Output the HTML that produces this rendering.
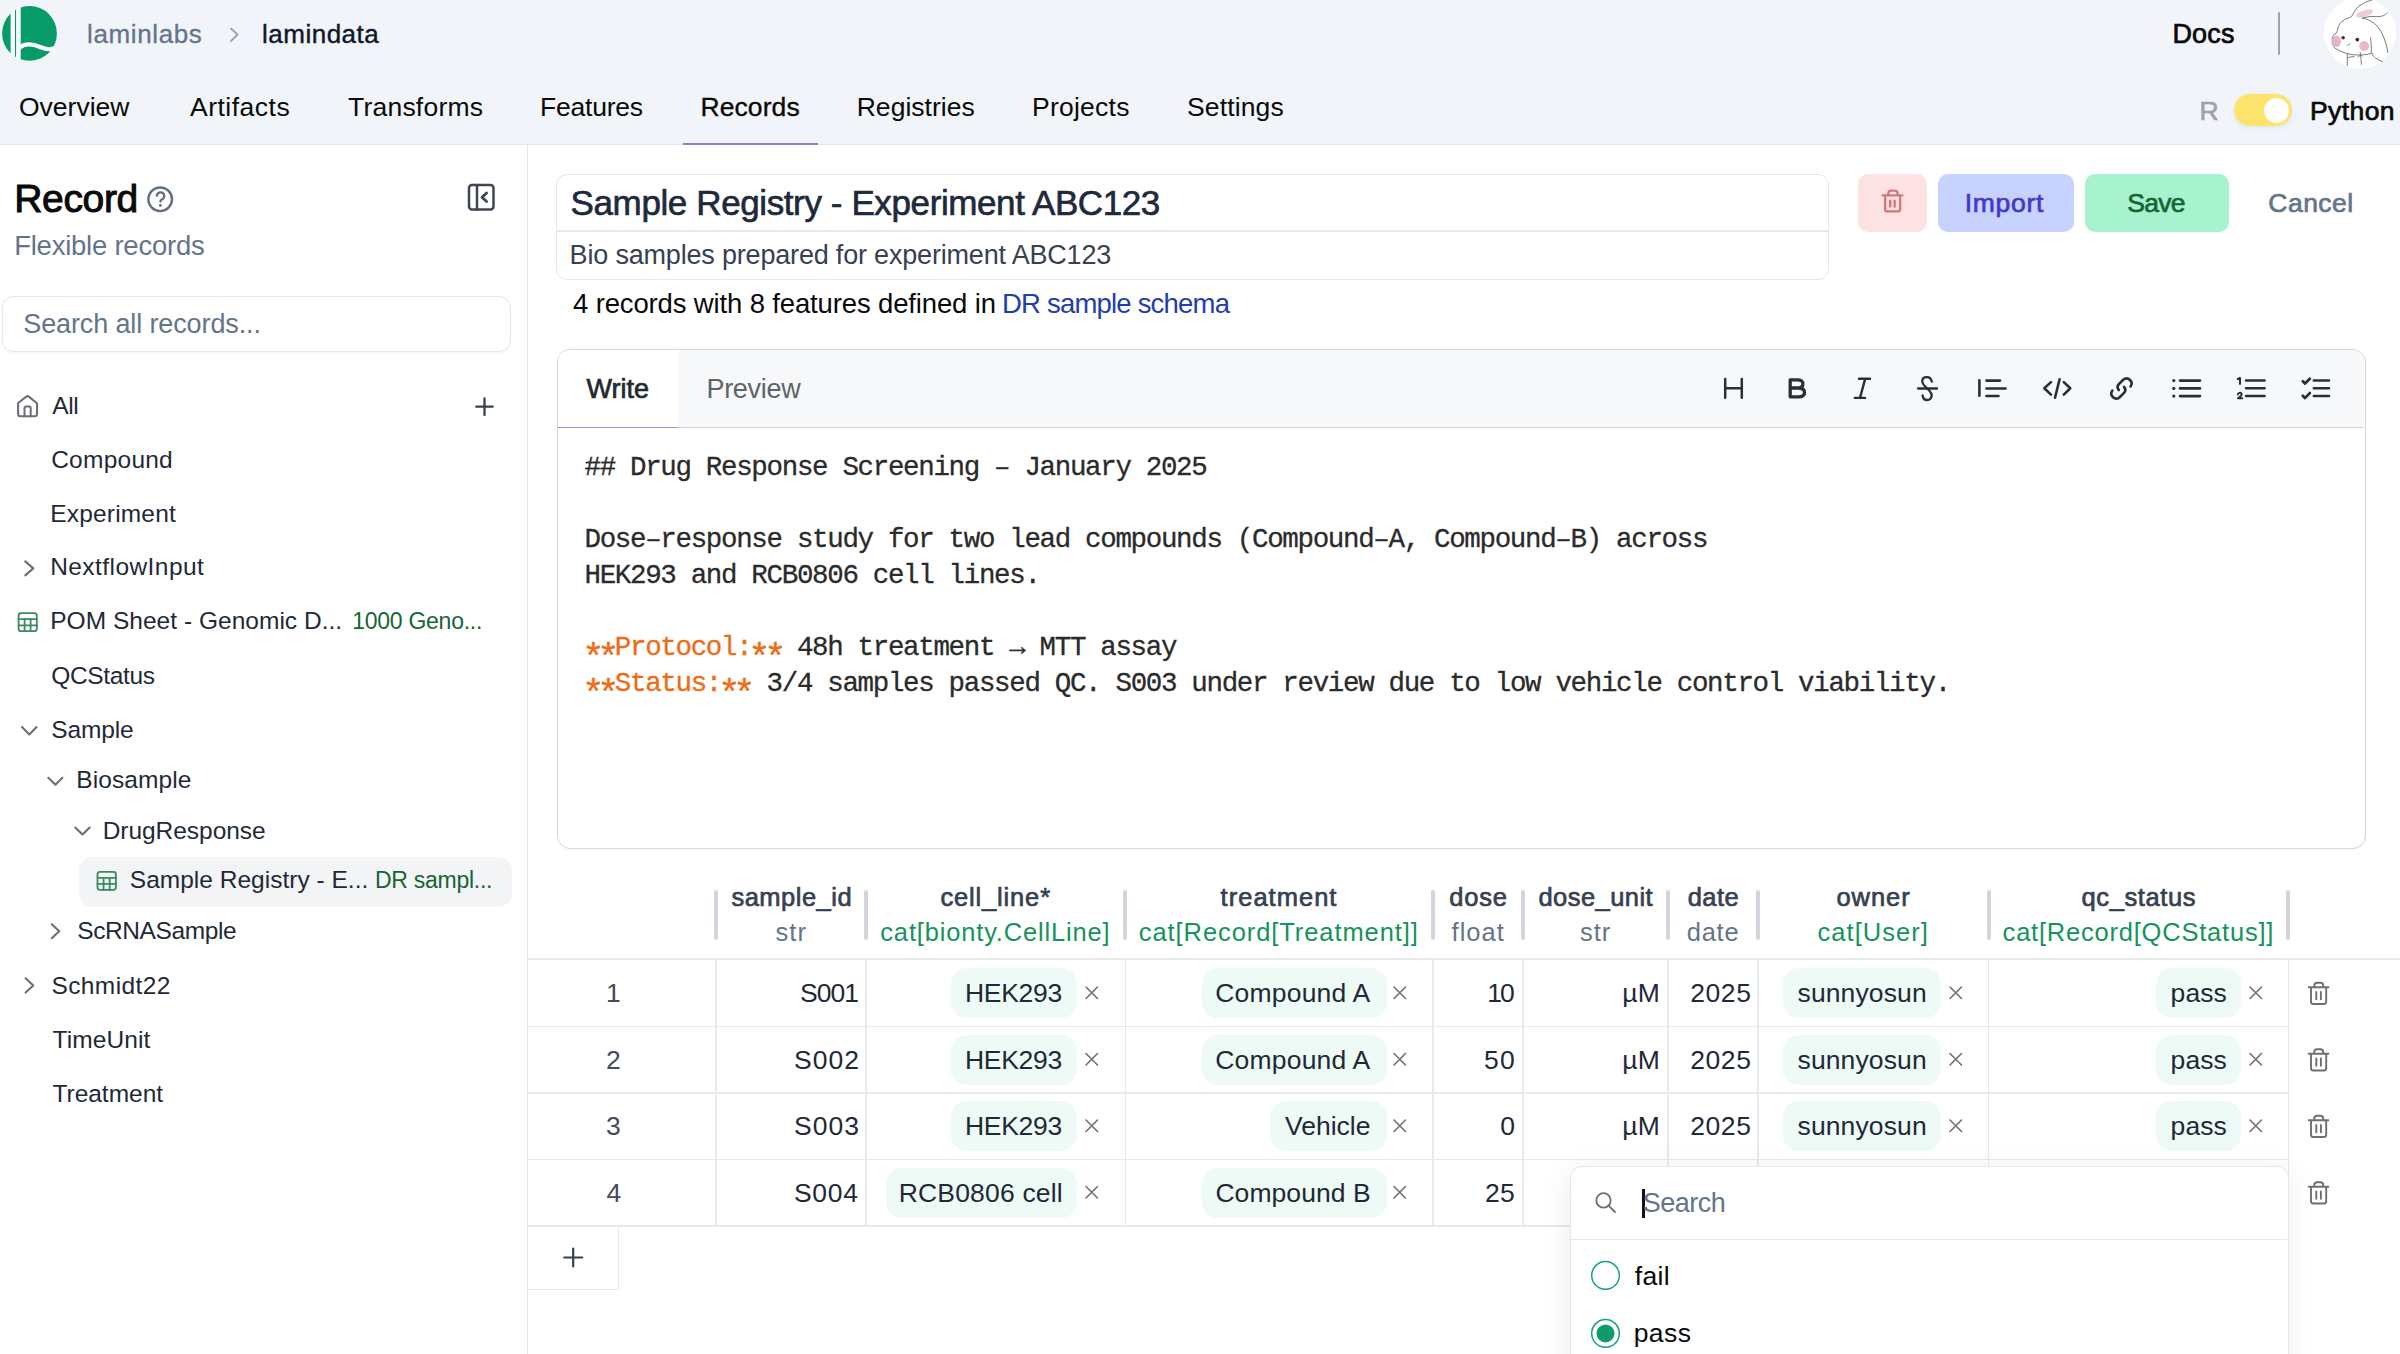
<!DOCTYPE html>
<html><head><meta charset="utf-8"><style>
html,body{margin:0;padding:0;width:2400px;height:1354px;overflow:hidden;background:#fff;font-family:'Liberation Sans',sans-serif}
.t{position:absolute;white-space:pre;line-height:1}
.b{position:absolute;box-sizing:border-box}
</style></head><body>
<!-- header -->
<div class=b style="left:0;top:0;width:2400px;height:145px;background:#f1f4f8;border-bottom:1px solid #e2e6ee"></div>
<div class=b style="left:683px;top:143px;width:135px;height:2px;background:#8a80d2"></div>
<div class=b style="left:2278px;top:12px;width:2px;height:43px;background:#9ca3af;border-radius:1px"></div>
<!-- toggle -->
<div class=b style="left:2234px;top:94px;width:58px;height:32px;border-radius:16px;background:#fde36c;box-shadow:0 2px 6px rgba(0,0,0,0.06)"></div>
<div class=b style="left:2263.5px;top:98px;width:25px;height:25px;border-radius:50%;background:#fff"></div>
<!-- sidebar -->
<div class=b style="left:526.5px;top:145px;width:1.5px;height:1209px;background:#e4e5ee"></div>
<div class=b style="left:2px;top:295.5px;width:509px;height:56px;border:1.5px solid #e5e7eb;border-radius:12px;box-shadow:0 1px 2px rgba(0,0,0,0.04)"></div>
<div class=b style="left:79px;top:856.5px;width:433px;height:50px;border-radius:14px;background:#f3f4f6"></div>
<!-- title box -->
<div class=b style="left:555.5px;top:174px;width:1273px;height:105.5px;border:1.5px solid #e5e7eb;border-radius:11px"></div>
<div class=b style="left:556px;top:230px;width:1272px;height:2px;background:#e3e7ee"></div>
<!-- buttons -->
<div class=b style="left:1858px;top:174px;width:69px;height:58px;border-radius:10px;background:#fde2e4"></div>
<div class=b style="left:1938px;top:174px;width:135.5px;height:58px;border-radius:10px;background:#c7d2fe"></div>
<div class=b style="left:2085px;top:174px;width:143.5px;height:58px;border-radius:10px;background:#a7f3d0"></div>
<!-- editor -->
<div class=b style="left:557px;top:349px;width:1809px;height:500px;border:1.5px solid #d3d5d9;border-radius:13px;overflow:hidden">
  <div class=b style="left:0;top:0;width:1806px;height:78px;background:#f6f8fa;border-bottom:1.5px solid #d3d5d9"></div>
  <div class=b style="left:0;top:0;width:120px;height:78px;background:#fff;border-bottom:1.5px solid #8a94e6"></div>
</div>
<!-- table header handles -->
<div class=b style="left:714px;top:890px;width:4px;height:50px;border-radius:2px;background:#d4d5dc"></div>
<div class=b style="left:864px;top:890px;width:4px;height:50px;border-radius:2px;background:#d4d5dc"></div>
<div class=b style="left:1123px;top:890px;width:4px;height:50px;border-radius:2px;background:#d4d5dc"></div>
<div class=b style="left:1431px;top:890px;width:4px;height:50px;border-radius:2px;background:#d4d5dc"></div>
<div class=b style="left:1521px;top:890px;width:4px;height:50px;border-radius:2px;background:#d4d5dc"></div>
<div class=b style="left:1666px;top:890px;width:4px;height:50px;border-radius:2px;background:#d4d5dc"></div>
<div class=b style="left:1756px;top:890px;width:4px;height:50px;border-radius:2px;background:#d4d5dc"></div>
<div class=b style="left:1986.5px;top:890px;width:4px;height:50px;border-radius:2px;background:#d4d5dc"></div>
<div class=b style="left:2286px;top:890px;width:4px;height:50px;border-radius:2px;background:#d4d5dc"></div>
<div class=b style="left:528px;top:958px;width:1872px;height:2px;background:#e5e7eb"></div>
<!-- row borders -->
<div class=b style="left:528px;top:1025.5px;width:1760px;height:1.5px;background:#e8e9ee"></div>
<div class=b style="left:528px;top:1092px;width:1760px;height:1.5px;background:#e8e9ee"></div>
<div class=b style="left:528px;top:1158.5px;width:1760px;height:1.5px;background:#e8e9ee"></div>
<div class=b style="left:528px;top:1225px;width:1760px;height:1.5px;background:#e8e9ee"></div>
<!-- col borders -->
<div class=b style="left:715px;top:960px;width:1.5px;height:266px;background:#e8e9ee"></div>
<div class=b style="left:865px;top:960px;width:1.5px;height:266px;background:#e8e9ee"></div>
<div class=b style="left:1124.5px;top:960px;width:1.5px;height:266px;background:#e8e9ee"></div>
<div class=b style="left:1432px;top:960px;width:1.5px;height:266px;background:#e8e9ee"></div>
<div class=b style="left:1522px;top:960px;width:1.5px;height:266px;background:#e8e9ee"></div>
<div class=b style="left:1667px;top:960px;width:1.5px;height:266px;background:#e8e9ee"></div>
<div class=b style="left:1757px;top:960px;width:1.5px;height:266px;background:#e8e9ee"></div>
<div class=b style="left:1987.5px;top:960px;width:1.5px;height:266px;background:#e8e9ee"></div>
<div class=b style="left:2287.5px;top:960px;width:1.5px;height:266px;background:#e8e9ee"></div>
<!-- add row box -->
<div class=b style="left:527px;top:1225px;width:92px;height:65px;border:1.5px solid #e8e9ee;border-left:none"></div>
<!-- chips rows 1-3 -->
<div class=b style="left:951px;top:968px;width:126px;height:50px;border-radius:16px;background:#eefaf5"></div>
<div class=b style="left:951px;top:1034.5px;width:126px;height:50px;border-radius:16px;background:#eefaf5"></div>
<div class=b style="left:951px;top:1101px;width:126px;height:50px;border-radius:16px;background:#eefaf5"></div>
<div class=b style="left:886px;top:1167.5px;width:191px;height:50px;border-radius:16px;background:#eefaf5"></div>
<div class=b style="left:1201.5px;top:968px;width:185px;height:50px;border-radius:16px;background:#eefaf5"></div>
<div class=b style="left:1201.5px;top:1034.5px;width:185px;height:50px;border-radius:16px;background:#eefaf5"></div>
<div class=b style="left:1270px;top:1101px;width:116.5px;height:50px;border-radius:16px;background:#eefaf5"></div>
<div class=b style="left:1202px;top:1167.5px;width:184.5px;height:50px;border-radius:16px;background:#eefaf5"></div>
<div class=b style="left:1783px;top:968px;width:158px;height:50px;border-radius:16px;background:#eefaf5"></div>
<div class=b style="left:1783px;top:1034.5px;width:158px;height:50px;border-radius:16px;background:#eefaf5"></div>
<div class=b style="left:1783px;top:1101px;width:158px;height:50px;border-radius:16px;background:#eefaf5"></div>
<div class=b style="left:2156px;top:968px;width:85px;height:50px;border-radius:16px;background:#eefaf5"></div>
<div class=b style="left:2156px;top:1034.5px;width:85px;height:50px;border-radius:16px;background:#eefaf5"></div>
<div class=b style="left:2156px;top:1101px;width:85px;height:50px;border-radius:16px;background:#eefaf5"></div>
<!-- dropdown -->
<div class=b style="left:1569.5px;top:1166px;width:719px;height:240px;border:1.5px solid #e5e7eb;border-radius:12px;background:#fff;box-shadow:0 4px 30px rgba(0,0,0,0.08)"></div>
<div class=b style="left:1571px;top:1238.5px;width:716px;height:1.5px;background:#e5e7eb"></div>
<div class=b style="left:1642px;top:1188.5px;width:2.5px;height:29px;background:#111"></div>

<span class=t style="left:87.0px;top:20.5px;font-family:'Liberation Sans';font-size:26px;font-weight:400;color:#64748b;letter-spacing:0.625px;-webkit-text-stroke:0.3px #64748b;">laminlabs</span>
<span class=t style="left:262.0px;top:20.5px;font-family:'Liberation Sans';font-size:26px;font-weight:400;color:#0f172a;letter-spacing:0.500px;-webkit-text-stroke:0.4px #0f172a;">lamindata</span>
<span class=t style="left:19.0px;top:94.0px;font-family:'Liberation Sans';font-size:26.5px;font-weight:400;color:#0a0a0a;letter-spacing:0.000px;">Overview</span>
<span class=t style="left:190.0px;top:94.0px;font-family:'Liberation Sans';font-size:26.5px;font-weight:400;color:#0a0a0a;letter-spacing:0.500px;">Artifacts</span>
<span class=t style="left:348.0px;top:94.0px;font-family:'Liberation Sans';font-size:26.5px;font-weight:400;color:#0a0a0a;letter-spacing:0.222px;">Transforms</span>
<span class=t style="left:540.0px;top:94.0px;font-family:'Liberation Sans';font-size:26.5px;font-weight:400;color:#0a0a0a;letter-spacing:-0.214px;">Features</span>
<span class=t style="left:700.5px;top:94.0px;font-family:'Liberation Sans';font-size:26.5px;font-weight:400;color:#0a0a0a;letter-spacing:0.083px;-webkit-text-stroke:0.35px #0a0a0a;">Records</span>
<span class=t style="left:856.7px;top:94.0px;font-family:'Liberation Sans';font-size:26.5px;font-weight:400;color:#0a0a0a;letter-spacing:0.033px;">Registries</span>
<span class=t style="left:1032.0px;top:94.0px;font-family:'Liberation Sans';font-size:26.5px;font-weight:400;color:#0a0a0a;letter-spacing:0.243px;">Projects</span>
<span class=t style="left:1187.0px;top:94.0px;font-family:'Liberation Sans';font-size:26.5px;font-weight:400;color:#0a0a0a;letter-spacing:0.143px;">Settings</span>
<span class=t style="left:2172.4px;top:20.6px;font-family:'Liberation Sans';font-size:27px;font-weight:400;color:#0a0a0a;letter-spacing:0.200px;-webkit-text-stroke:0.70px #0a0a0a;">Docs</span>
<span class=t style="left:2199.5px;top:97.6px;font-family:'Liberation Sans';font-size:26.5px;font-weight:400;color:#9ca3af;letter-spacing:0.000px;-webkit-text-stroke:0.70px #9ca3af;">R</span>
<span class=t style="left:2310.0px;top:97.6px;font-family:'Liberation Sans';font-size:26.5px;font-weight:400;color:#0a0a0a;letter-spacing:0.400px;-webkit-text-stroke:0.70px #0a0a0a;">Python</span>
<span class=t style="left:14.2px;top:179.2px;font-family:'Liberation Sans';font-size:39px;font-weight:400;color:#0a0a0a;letter-spacing:-0.320px;-webkit-text-stroke:1.00px #0a0a0a;">Record</span>
<span class=t style="left:14.2px;top:232.0px;font-family:'Liberation Sans';font-size:27.5px;font-weight:400;color:#64748b;letter-spacing:-0.240px;">Flexible records</span>
<span class=t style="left:23.3px;top:311.3px;font-family:'Liberation Sans';font-size:27px;font-weight:400;color:#64748b;letter-spacing:-0.125px;">Search all records...</span>
<span class=t style="left:52.2px;top:393.9px;font-family:'Liberation Sans';font-size:24.5px;font-weight:400;color:#1f2937;letter-spacing:-0.400px;">All</span>
<span class=t style="left:51.2px;top:447.7px;font-family:'Liberation Sans';font-size:24.5px;font-weight:400;color:#1f2937;letter-spacing:0.243px;">Compound</span>
<span class=t style="left:50.2px;top:501.5px;font-family:'Liberation Sans';font-size:24.5px;font-weight:400;color:#1f2937;letter-spacing:0.189px;">Experiment</span>
<span class=t style="left:50.2px;top:555.4px;font-family:'Liberation Sans';font-size:24.5px;font-weight:400;color:#1f2937;letter-spacing:0.433px;">NextflowInput</span>
<span class=t style="left:50.2px;top:609.2px;font-family:'Liberation Sans';font-size:24.5px;font-weight:400;color:#1f2937;letter-spacing:0.026px;">POM Sheet - Genomic D...</span>
<span class=t style="left:51.2px;top:663.5px;font-family:'Liberation Sans';font-size:24.5px;font-weight:400;color:#1f2937;letter-spacing:-0.343px;">QCStatus</span>
<span class=t style="left:51.2px;top:717.5px;font-family:'Liberation Sans';font-size:24.5px;font-weight:400;color:#1f2937;letter-spacing:-0.120px;">Sample</span>
<span class=t style="left:76.2px;top:768.3px;font-family:'Liberation Sans';font-size:24.5px;font-weight:400;color:#1f2937;letter-spacing:0.100px;">Biosample</span>
<span class=t style="left:102.7px;top:818.6px;font-family:'Liberation Sans';font-size:24.5px;font-weight:400;color:#1f2937;letter-spacing:-0.045px;">DrugResponse</span>
<span class=t style="left:129.8px;top:868.3px;font-family:'Liberation Sans';font-size:24.5px;font-weight:400;color:#1f2937;letter-spacing:0.010px;">Sample Registry - E...</span>
<span class=t style="left:77.2px;top:919.3px;font-family:'Liberation Sans';font-size:24.5px;font-weight:400;color:#1f2937;letter-spacing:-0.390px;">ScRNASample</span>
<span class=t style="left:51.5px;top:973.9px;font-family:'Liberation Sans';font-size:24.5px;font-weight:400;color:#1f2937;letter-spacing:0.375px;">Schmidt22</span>
<span class=t style="left:52.5px;top:1028.1px;font-family:'Liberation Sans';font-size:24.5px;font-weight:400;color:#1f2937;letter-spacing:0.100px;">TimeUnit</span>
<span class=t style="left:52.5px;top:1081.8px;font-family:'Liberation Sans';font-size:24.5px;font-weight:400;color:#1f2937;letter-spacing:-0.025px;">Treatment</span>
<span class=t style="left:352.3px;top:610.2px;font-family:'Liberation Sans';font-size:23px;font-weight:400;color:#166534;letter-spacing:-0.273px;">1000 Geno...</span>
<span class=t style="left:375.0px;top:869.3px;font-family:'Liberation Sans';font-size:23px;font-weight:400;color:#166534;letter-spacing:-0.270px;">DR sampl...</span>
<span class=t style="left:570.6px;top:184.6px;font-family:'Liberation Sans';font-size:35px;font-weight:400;color:#1e293b;letter-spacing:-0.391px;-webkit-text-stroke:0.65px #1e293b;">Sample Registry - Experiment ABC123</span>
<span class=t style="left:569.6px;top:242.1px;font-family:'Liberation Sans';font-size:27px;font-weight:400;color:#374151;letter-spacing:-0.185px;">Bio samples prepared for experiment ABC123</span>
<span class=t style="left:573.0px;top:290.3px;font-family:'Liberation Sans';font-size:27.5px;font-weight:400;color:#0a0a0a;letter-spacing:-0.143px;">4 records with 8 features defined in</span>
<span class=t style="left:1002.0px;top:290.3px;font-family:'Liberation Sans';font-size:27.5px;font-weight:400;color:#1e40af;letter-spacing:-0.800px;">DR sample schema</span>
<span class=t style="left:1964.7px;top:189.7px;font-family:'Liberation Sans';font-size:26.5px;font-weight:400;color:#4338ca;letter-spacing:0.720px;-webkit-text-stroke:0.70px #4338ca;">Import</span>
<span class=t style="left:2127.3px;top:189.7px;font-family:'Liberation Sans';font-size:26.5px;font-weight:400;color:#166534;letter-spacing:-0.767px;-webkit-text-stroke:0.70px #166534;">Save</span>
<span class=t style="left:2268.3px;top:189.7px;font-family:'Liberation Sans';font-size:26.5px;font-weight:400;color:#64748b;letter-spacing:0.480px;-webkit-text-stroke:0.70px #64748b;">Cancel</span>
<span class=t style="left:586.6px;top:375.6px;font-family:'Liberation Sans';font-size:27px;font-weight:400;color:#24292f;letter-spacing:0.000px;-webkit-text-stroke:0.70px #24292f;">Write</span>
<span class=t style="left:706.5px;top:375.6px;font-family:'Liberation Sans';font-size:27px;font-weight:400;color:#5f6369;letter-spacing:-0.317px;">Preview</span>
<span class=t style="left:731.4px;top:885.0px;font-family:'Liberation Sans';font-size:25.5px;font-weight:400;color:#374151;letter-spacing:0.500px;-webkit-text-stroke:0.70px #374151;">sample_id</span>
<span class=t style="left:940.4px;top:885.0px;font-family:'Liberation Sans';font-size:25.5px;font-weight:400;color:#374151;letter-spacing:0.844px;-webkit-text-stroke:0.70px #374151;">cell_line*</span>
<span class=t style="left:1220.6px;top:885.0px;font-family:'Liberation Sans';font-size:25.5px;font-weight:400;color:#374151;letter-spacing:1.013px;-webkit-text-stroke:0.70px #374151;">treatment</span>
<span class=t style="left:1449.2px;top:885.0px;font-family:'Liberation Sans';font-size:25.5px;font-weight:400;color:#374151;letter-spacing:0.833px;-webkit-text-stroke:0.70px #374151;">dose</span>
<span class=t style="left:1538.5px;top:885.0px;font-family:'Liberation Sans';font-size:25.5px;font-weight:400;color:#374151;letter-spacing:0.438px;-webkit-text-stroke:0.70px #374151;">dose_unit</span>
<span class=t style="left:1687.7px;top:885.0px;font-family:'Liberation Sans';font-size:25.5px;font-weight:400;color:#374151;letter-spacing:0.433px;-webkit-text-stroke:0.70px #374151;">date</span>
<span class=t style="left:1836.4px;top:885.0px;font-family:'Liberation Sans';font-size:25.5px;font-weight:400;color:#374151;letter-spacing:0.950px;-webkit-text-stroke:0.70px #374151;">owner</span>
<span class=t style="left:2081.5px;top:885.0px;font-family:'Liberation Sans';font-size:25.5px;font-weight:400;color:#374151;letter-spacing:0.600px;-webkit-text-stroke:0.70px #374151;">qc_status</span>
<span class=t style="left:775.6px;top:920.0px;font-family:'Liberation Sans';font-size:25.5px;font-weight:400;color:#64748b;letter-spacing:1.000px;">str</span>
<span class=t style="left:880.3px;top:920.0px;font-family:'Liberation Sans';font-size:25.5px;font-weight:400;color:#15935c;letter-spacing:0.826px;">cat[bionty.CellLine]</span>
<span class=t style="left:1138.8px;top:920.0px;font-family:'Liberation Sans';font-size:25.5px;font-weight:400;color:#15935c;letter-spacing:0.914px;">cat[Record[Treatment]]</span>
<span class=t style="left:1451.5px;top:920.0px;font-family:'Liberation Sans';font-size:25.5px;font-weight:400;color:#64748b;letter-spacing:1.050px;">float</span>
<span class=t style="left:1580.0px;top:920.0px;font-family:'Liberation Sans';font-size:25.5px;font-weight:400;color:#64748b;letter-spacing:1.000px;">str</span>
<span class=t style="left:1686.7px;top:920.0px;font-family:'Liberation Sans';font-size:25.5px;font-weight:400;color:#64748b;letter-spacing:0.767px;">date</span>
<span class=t style="left:1817.5px;top:920.0px;font-family:'Liberation Sans';font-size:25.5px;font-weight:400;color:#15935c;letter-spacing:1.037px;">cat[User]</span>
<span class=t style="left:2002.6px;top:920.0px;font-family:'Liberation Sans';font-size:25.5px;font-weight:400;color:#15935c;letter-spacing:0.785px;">cat[Record[QCStatus]]</span>
<span class=t style="left:606.0px;top:980.0px;font-family:'Liberation Sans';font-size:26.5px;font-weight:400;color:#454c59;letter-spacing:0.000px;">1</span>
<span class=t style="left:606.0px;top:1046.5px;font-family:'Liberation Sans';font-size:26.5px;font-weight:400;color:#454c59;letter-spacing:0.000px;">2</span>
<span class=t style="left:606.0px;top:1113.0px;font-family:'Liberation Sans';font-size:26.5px;font-weight:400;color:#454c59;letter-spacing:0.000px;">3</span>
<span class=t style="left:606.5px;top:1179.5px;font-family:'Liberation Sans';font-size:26.5px;font-weight:400;color:#454c59;letter-spacing:0.000px;">4</span>
<span class=t style="left:800.0px;top:980.0px;font-family:'Liberation Sans';font-size:26.5px;font-weight:400;color:#1f2937;letter-spacing:-1.000px;">S001</span>
<span class=t style="left:794.0px;top:1046.5px;font-family:'Liberation Sans';font-size:26.5px;font-weight:400;color:#1f2937;letter-spacing:1.000px;">S002</span>
<span class=t style="left:794.0px;top:1113.0px;font-family:'Liberation Sans';font-size:26.5px;font-weight:400;color:#1f2937;letter-spacing:1.000px;">S003</span>
<span class=t style="left:794.0px;top:1179.5px;font-family:'Liberation Sans';font-size:26.5px;font-weight:400;color:#1f2937;letter-spacing:0.667px;">S004</span>
<span class=t style="left:965.0px;top:980.0px;font-family:'Liberation Sans';font-size:26.5px;font-weight:400;color:#1f2937;letter-spacing:-0.300px;">HEK293</span>
<span class=t style="left:1622.2px;top:980.0px;font-family:'Liberation Sans';font-size:26.5px;font-weight:400;color:#1f2937;letter-spacing:0.300px;">µM</span>
<span class=t style="left:1690.2px;top:980.0px;font-family:'Liberation Sans';font-size:26.5px;font-weight:400;color:#1f2937;letter-spacing:0.600px;">2025</span>
<span class=t style="left:1797.5px;top:980.0px;font-family:'Liberation Sans';font-size:26.5px;font-weight:400;color:#1f2937;letter-spacing:0.125px;">sunnyosun</span>
<span class=t style="left:2170.6px;top:980.0px;font-family:'Liberation Sans';font-size:26.5px;font-weight:400;color:#1f2937;letter-spacing:0.100px;">pass</span>
<span class=t style="left:965.0px;top:1046.5px;font-family:'Liberation Sans';font-size:26.5px;font-weight:400;color:#1f2937;letter-spacing:-0.300px;">HEK293</span>
<span class=t style="left:1622.2px;top:1046.5px;font-family:'Liberation Sans';font-size:26.5px;font-weight:400;color:#1f2937;letter-spacing:0.300px;">µM</span>
<span class=t style="left:1690.2px;top:1046.5px;font-family:'Liberation Sans';font-size:26.5px;font-weight:400;color:#1f2937;letter-spacing:0.600px;">2025</span>
<span class=t style="left:1797.5px;top:1046.5px;font-family:'Liberation Sans';font-size:26.5px;font-weight:400;color:#1f2937;letter-spacing:0.125px;">sunnyosun</span>
<span class=t style="left:2170.6px;top:1046.5px;font-family:'Liberation Sans';font-size:26.5px;font-weight:400;color:#1f2937;letter-spacing:0.100px;">pass</span>
<span class=t style="left:965.0px;top:1113.0px;font-family:'Liberation Sans';font-size:26.5px;font-weight:400;color:#1f2937;letter-spacing:-0.300px;">HEK293</span>
<span class=t style="left:1622.2px;top:1113.0px;font-family:'Liberation Sans';font-size:26.5px;font-weight:400;color:#1f2937;letter-spacing:0.300px;">µM</span>
<span class=t style="left:1690.2px;top:1113.0px;font-family:'Liberation Sans';font-size:26.5px;font-weight:400;color:#1f2937;letter-spacing:0.600px;">2025</span>
<span class=t style="left:1797.5px;top:1113.0px;font-family:'Liberation Sans';font-size:26.5px;font-weight:400;color:#1f2937;letter-spacing:0.125px;">sunnyosun</span>
<span class=t style="left:2170.6px;top:1113.0px;font-family:'Liberation Sans';font-size:26.5px;font-weight:400;color:#1f2937;letter-spacing:0.100px;">pass</span>
<span class=t style="left:898.7px;top:1179.5px;font-family:'Liberation Sans';font-size:26.5px;font-weight:400;color:#1f2937;letter-spacing:0.182px;">RCB0806 cell</span>
<span class=t style="left:1215.3px;top:980.0px;font-family:'Liberation Sans';font-size:26.5px;font-weight:400;color:#1f2937;letter-spacing:0.189px;">Compound A</span>
<span class=t style="left:1215.3px;top:1046.5px;font-family:'Liberation Sans';font-size:26.5px;font-weight:400;color:#1f2937;letter-spacing:0.189px;">Compound A</span>
<span class=t style="left:1285.0px;top:1113.0px;font-family:'Liberation Sans';font-size:26.5px;font-weight:400;color:#1f2937;letter-spacing:0.000px;">Vehicle</span>
<span class=t style="left:1215.4px;top:1179.5px;font-family:'Liberation Sans';font-size:26.5px;font-weight:400;color:#1f2937;letter-spacing:0.067px;">Compound B</span>
<span class=t style="left:1487.3px;top:980.0px;font-family:'Liberation Sans';font-size:26.5px;font-weight:400;color:#1f2937;letter-spacing:-2.100px;">10</span>
<span class=t style="left:1484.0px;top:1046.5px;font-family:'Liberation Sans';font-size:26.5px;font-weight:400;color:#1f2937;letter-spacing:1.200px;">50</span>
<span class=t style="left:1500.2px;top:1113.0px;font-family:'Liberation Sans';font-size:26.5px;font-weight:400;color:#1f2937;letter-spacing:0.000px;">0</span>
<span class=t style="left:1485.0px;top:1179.5px;font-family:'Liberation Sans';font-size:26.5px;font-weight:400;color:#1f2937;letter-spacing:0.200px;">25</span>
<span class=t style="left:1642.7px;top:1190.0px;font-family:'Liberation Sans';font-size:27px;font-weight:400;color:#64748b;letter-spacing:-0.500px;">Search</span>
<span class=t style="left:1634.7px;top:1263.0px;font-family:'Liberation Sans';font-size:26.5px;font-weight:400;color:#0a0a0a;letter-spacing:0.333px;">fail</span>
<span class=t style="left:1633.7px;top:1319.5px;font-family:'Liberation Sans';font-size:26.5px;font-weight:400;color:#0a0a0a;letter-spacing:0.433px;">pass</span>
<span class=t style="left:584.5px;top:454.0px;font-family:'Liberation Mono';font-size:27.5px;color:#2b2b2b;letter-spacing:-1.333px;-webkit-text-stroke:0.3px currentColor">## Drug Response Screening – January 2025</span>
<span class=t style="left:584.5px;top:526.0px;font-family:'Liberation Mono';font-size:27.5px;color:#2b2b2b;letter-spacing:-1.333px;-webkit-text-stroke:0.3px currentColor">Dose–response study for two lead compounds (Compound–A, Compound–B) across</span>
<span class=t style="left:584.5px;top:562.0px;font-family:'Liberation Mono';font-size:27.5px;color:#2b2b2b;letter-spacing:-1.333px;-webkit-text-stroke:0.3px currentColor">HEK293 and RCB0806 cell lines.</span>
<span class=t style="left:584.5px;top:634.0px;font-family:'Liberation Mono';font-size:27.5px;color:#2b2b2b;letter-spacing:-1.333px;-webkit-text-stroke:0.3px currentColor"><span style='color:#ee6c14'><span style='display:inline-block;transform:translateY(11px) scale(1.35)'>*</span><span style='display:inline-block;transform:translateY(11px) scale(1.35)'>*</span>Protocol:<span style='display:inline-block;transform:translateY(11px) scale(1.35)'>*</span><span style='display:inline-block;transform:translateY(11px) scale(1.35)'>*</span></span> 48h treatment → MTT assay</span>
<span class=t style="left:584.5px;top:670.0px;font-family:'Liberation Mono';font-size:27.5px;color:#2b2b2b;letter-spacing:-1.333px;-webkit-text-stroke:0.3px currentColor"><span style='color:#ee6c14'><span style='display:inline-block;transform:translateY(11px) scale(1.35)'>*</span><span style='display:inline-block;transform:translateY(11px) scale(1.35)'>*</span>Status:<span style='display:inline-block;transform:translateY(11px) scale(1.35)'>*</span><span style='display:inline-block;transform:translateY(11px) scale(1.35)'>*</span></span> 3/4 samples passed QC. S003 under review due to low vehicle control viability.</span>
<svg style="position:absolute;left:0;top:0" width="2400" height="1354" viewBox="0 0 2400 1354" fill="none" stroke-linecap="round" stroke-linejoin="round">
<!-- logo -->
<defs><clipPath id="lc"><circle cx="29.5" cy="33.4" r="28.2"/></clipPath></defs>
<circle cx="29.5" cy="33.4" r="28.2" fill="#f7fbf9"/>
<circle cx="29.5" cy="33.4" r="27.4" fill="#079b69"/>
<g clip-path="url(#lc)">
<rect x="10.6" y="0" width="4.4" height="70" fill="#fbfdfc"/>
<rect x="16.1" y="0" width="4.6" height="70" fill="#fbfdfc"/>
<path d="M20 47.3 C 26 43, 33 44, 40 47 S 52 50.5, 60 45.5" stroke="#fbfdfc" stroke-width="4.2" fill="none"/>
</g>
<!-- breadcrumb chevron -->
<polyline points="231,28.5 237.5,34.7 231,41" stroke="#94a3b8" stroke-width="1.8"/>
<!-- avatar -->
<g stroke="#6f6f6f" stroke-width="0.9" fill="none">
<circle cx="2360" cy="33" r="36" fill="#ffffff" stroke="none"/>
<path d="M2373 -0.5 Q2366 1 2359 6 Q2354.5 10 2351.5 16.6 Q2349 18 2344.8 19.4 Q2339.5 22.5 2338.2 26.6 Q2337.5 31 2336.8 32.7 Q2333 34 2332.2 38 Q2331 44 2334.8 48.2 Q2340 51.5 2347 53.7"/>
<ellipse cx="2364.5" cy="13.5" rx="9" ry="3.2" fill="#ebcdd3" stroke="none" transform="rotate(-18 2364.5 13.5)"/>
<path d="M2362.5 18 Q2371 15.5 2377 16.6 Q2384 17 2387.5 12.7"/>
<path d="M2362.5 18 Q2372 20 2378 27 Q2385 36 2388 52.6"/>
<path d="M2370.6 37.7 Q2371.5 46 2371.4 52.6 Q2373 56.5 2375.8 58.2 Q2379 60.5 2382.5 61.5"/>
<path d="M2347 53.7 Q2354 55.5 2362 55 Q2368 54.5 2372 53.2"/>
<path d="M2347.3 54.3 V65.4 M2360.3 52.6 Q2361 58 2361.4 64.3 M2348 57.5 L2354 56.5 M2358 57 Q2361 54 2362 56"/>
<path d="M2347 45.4 L2350.3 43.8" stroke-width="0.7"/>
</g>
<ellipse cx="2336.5" cy="41.3" rx="4.5" ry="5.8" fill="#e6b3c8"/>
<ellipse cx="2364.2" cy="46" rx="5" ry="5" fill="#e8b8cb"/>
<circle cx="2343.1" cy="37.7" r="1.8" fill="#4a2f20"/>
<circle cx="2357.3" cy="39.6" r="1.9" fill="#4a2f20"/>
<!-- help icon -->
<circle cx="160.2" cy="199.3" r="11.8" stroke="#5f6f86" stroke-width="2.4"/>
<path d="M156.8 195.6 Q157.6 192.4 160.6 192.4 Q164.2 192.4 164.2 196 Q164.2 198.4 161.9 199.6 Q160.4 200.4 160.4 201.6" stroke="#5f6f86" stroke-width="2.3"/>
<circle cx="160.4" cy="205.4" r="1.45" fill="#5f6f86"/>
<!-- collapse icon -->
<rect x="469" y="185" width="24.5" height="24.5" rx="3" stroke="#404552" stroke-width="2.5"/>
<line x1="477" y1="185" x2="477" y2="209.5" stroke="#404552" stroke-width="2.5"/>
<polyline points="486.6,193 482,197.3 486.6,201.6" stroke="#404552" stroke-width="2.8"/>
<!-- home -->
<path d="M18.1 403 L26.3 396.6 Q27.55 395.6 28.8 396.6 L37 403.3 V414 Q37 416.2 34.8 416.2 H20.3 Q18.1 416.2 18.1 414 Z" stroke="#6d6e74" stroke-width="2"/>
<path d="M24.5 416.2 V408 Q24.5 406.5 26 406.5 H29.2 Q30.7 406.5 30.7 408 V416.2" stroke="#6d6e74" stroke-width="2"/>
<!-- plus in sidebar -->
<path d="M484.5 398.5 V415 M476.3 406.7 H492.7" stroke="#374151" stroke-width="2.3"/>
<!-- tree chevrons -->
<polyline points="25.3,561.4 33.3,568.4 25.3,575.4" stroke="#6d6e76" stroke-width="2.1"/>
<polyline points="22,727 29.3,734.5 36.5,727" stroke="#6d6e76" stroke-width="2.1"/>
<polyline points="48.3,777.8 55.4,784.7 62.4,777.8" stroke="#6d6e76" stroke-width="2.1"/>
<polyline points="75.2,827.6 82.5,834.5 89.7,827.6" stroke="#6d6e76" stroke-width="2.1"/>
<polyline points="51.8,924.3 59.2,931.3 51.8,938.3" stroke="#6d6e76" stroke-width="2.1"/>
<polyline points="25.6,978.3 33.3,985.5 25.6,992.6" stroke="#6d6e76" stroke-width="2.1"/>
<!-- table icons -->
<g stroke="#3a8a60" stroke-width="1.8">
<rect x="18.6" y="613.2" width="18.2" height="18" rx="2.5"/>
<line x1="18.6" y1="619.2" x2="36.8" y2="619.2"/><line x1="18.6" y1="625.3" x2="36.8" y2="625.3"/>
<line x1="24.6" y1="619.2" x2="24.6" y2="631.2"/><line x1="30.6" y1="619.2" x2="30.6" y2="631.2"/>
<rect x="97.5" y="871.8" width="18.4" height="18" rx="2.5"/>
<line x1="97.5" y1="877.8" x2="115.9" y2="877.8"/><line x1="97.5" y1="883.9" x2="115.9" y2="883.9"/>
<line x1="103.6" y1="877.8" x2="103.6" y2="889.8"/><line x1="109.7" y1="877.8" x2="109.7" y2="889.8"/>
</g>
<!-- header trash (red) -->
<g stroke="#d4777c" stroke-width="2.3">
<path d="M1882.6 195.3 H1902.4 M1888.3 195.3 V193.6 Q1888.3 190.7 1891.2 190.7 H1894.7 Q1897.6 190.7 1897.6 193.6 V195.3 M1885.1 195.3 V209.2 Q1885.1 211.4 1887.3 211.4 H1897.9 Q1900.1 211.4 1900.1 209.2 V195.3"/>
<path d="M1890.2 199.8 V207.4 M1894.6 199.8 V207.4" stroke-linecap="butt" stroke-width="2.4"/>
</g>
<!-- toolbar icons -->
<g stroke="#2a2f37" stroke-width="2.5" fill="none">
<path d="M1725.2 379 V397.8 M1741.8 379 V397.8 M1725.2 388.3 H1741.8"/>
<path d="M1790.2 379.9 H1797.3 Q1802.9 379.9 1802.9 383.9 Q1802.9 388 1797.3 388 H1790.2 M1790.2 388 H1798.4 Q1804.5 388 1804.5 392.4 Q1804.5 396.8 1798.4 396.8 H1790.2 V379.9" stroke-width="3.3"/>
<path d="M1859 378.8 H1870 M1854.8 397.9 H1865 M1865.2 378.8 L1860 397.9" stroke-width="2.4"/>
<path d="M1918 388.5 H1937" stroke-width="2.3"/>
<path d="M1931.8 381.6 Q1930.8 377.2 1927 377.2 Q1922.2 377.3 1922.2 381.2 Q1922.3 383.8 1925.5 386.8 L1929.2 390.5 Q1931.8 393.2 1931.7 395.3 Q1931.4 400 1927.1 400 Q1923.2 400 1922.6 395.5" stroke-width="2.3"/>
<path d="M1979.4 380.4 V395.8 M1986.4 380.6 H2000 M1986.4 388.5 H2005.6 M1986.4 396 H1998.5" stroke-width="2.6"/>
<path d="M2051 382.1 L2044.3 388.2 L2051 394.6 M2063.8 382.1 L2070.3 388.2 L2063.8 394.6 M2059.6 379.2 L2055 397.7" stroke-width="2.6"/>
<path d="M2130.5 386.5 A5 5 0 0 0 2123.5 379.5 L2118.6 384.4 Q2116.3 387.3 2118.8 390 M2112.4 390.5 A5 5 0 0 0 2119.4 397.5 L2124.3 392.6 Q2126.6 389.7 2124.1 387" stroke-width="2.6"/>
<path d="M2180 380.6 H2200 M2180 388.4 H2200 M2180 396.1 H2200" stroke-width="2.6"/>
<circle cx="2173.8" cy="380.6" r="1.6" fill="#2a2f37" stroke="none"/><circle cx="2173.8" cy="388.4" r="1.6" fill="#2a2f37" stroke="none"/><circle cx="2173.8" cy="396.1" r="1.6" fill="#2a2f37" stroke="none"/>
<path d="M2246 380.6 H2264.6 M2246 388.3 H2264.6 M2246 396.1 H2264.6" stroke-width="2.5"/>
<path d="M2237.8 379 L2240 378 V384" stroke-width="2"/>
<path d="M2237.8 394.5 Q2238.3 392.6 2240.1 392.7 Q2242.2 393 2241.5 395 Q2241 396 2238 398.3 H2242.3" stroke-width="1.9"/>
<path d="M2313.8 380.6 H2329 M2313.8 388.3 H2329 M2313.8 396.1 H2329" stroke-width="2.5"/>
<path d="M2302.8 381.3 L2305 383.6 L2309.8 378.7 M2302.8 395.8 L2305 398.1 L2309.8 393.1" stroke-width="2.8"/>
</g>
<!-- chip x marks -->
<g stroke="#707076" stroke-width="1.6">
<path d="M1086 987 L1097.5 998.5 M1097.5 987 L1086 998.5"/>
<path d="M1086 1053.5 L1097.5 1065 M1097.5 1053.5 L1086 1065"/>
<path d="M1086 1120 L1097.5 1131.5 M1097.5 1120 L1086 1131.5"/>
<path d="M1086 1186.5 L1097.5 1198 M1097.5 1186.5 L1086 1198"/>
<path d="M1394 987 L1405.5 998.5 M1405.5 987 L1394 998.5"/>
<path d="M1394 1053.5 L1405.5 1065 M1405.5 1053.5 L1394 1065"/>
<path d="M1394 1120 L1405.5 1131.5 M1405.5 1120 L1394 1131.5"/>
<path d="M1394 1186.5 L1405.5 1198 M1405.5 1186.5 L1394 1198"/>
<path d="M1950 987 L1961.5 998.5 M1961.5 987 L1950 998.5"/>
<path d="M1950 1053.5 L1961.5 1065 M1961.5 1053.5 L1950 1065"/>
<path d="M1950 1120 L1961.5 1131.5 M1961.5 1120 L1950 1131.5"/>
<path d="M2250 987 L2261.5 998.5 M2261.5 987 L2250 998.5"/>
<path d="M2250 1053.5 L2261.5 1065 M2261.5 1053.5 L2250 1065"/>
<path d="M2250 1120 L2261.5 1131.5 M2261.5 1120 L2250 1131.5"/>
</g>
<!-- row trash icons -->
<g stroke="#6e6e74" stroke-width="1.9" id="trash">
<path d="M2308.8 987.3 H2328.4 M2314.3 987.3 V985.6 Q2314.3 982.8 2317.1 982.8 H2320.4 Q2323.2 982.8 2323.2 985.6 V987.3 M2311 987.3 V1001.8 Q2311 1004 2313.2 1004 H2324 Q2326.2 1004 2326.2 1001.8 V987.3 M2316.3 992 V999.2 M2320.9 992 V999.2"/>
</g>
<use href="#trash" transform="translate(0,66.5)"/>
<use href="#trash" transform="translate(0,133)"/>
<use href="#trash" transform="translate(0,199.5)"/>
<!-- add row plus -->
<path d="M573.2 1248.5 V1266.5 M564.2 1257.5 H582.2" stroke="#374151" stroke-width="2.2"/>
<!-- dropdown icons -->
<circle cx="1603.5" cy="1200.4" r="7.2" stroke="#6e6e70" stroke-width="1.8"/>
<path d="M1608.9 1205.9 L1615 1212" stroke="#6e6e70" stroke-width="1.8"/>
<circle cx="1605.5" cy="1275.4" r="13.8" stroke="#16a085" stroke-width="1.5" fill="#fff"/>
<circle cx="1605.5" cy="1333.4" r="13.8" stroke="#16a085" stroke-width="1.5" fill="#fff"/>
<circle cx="1605.5" cy="1333.4" r="9" fill="#0f9b6a" stroke="none"/>
</svg>

</body></html>
